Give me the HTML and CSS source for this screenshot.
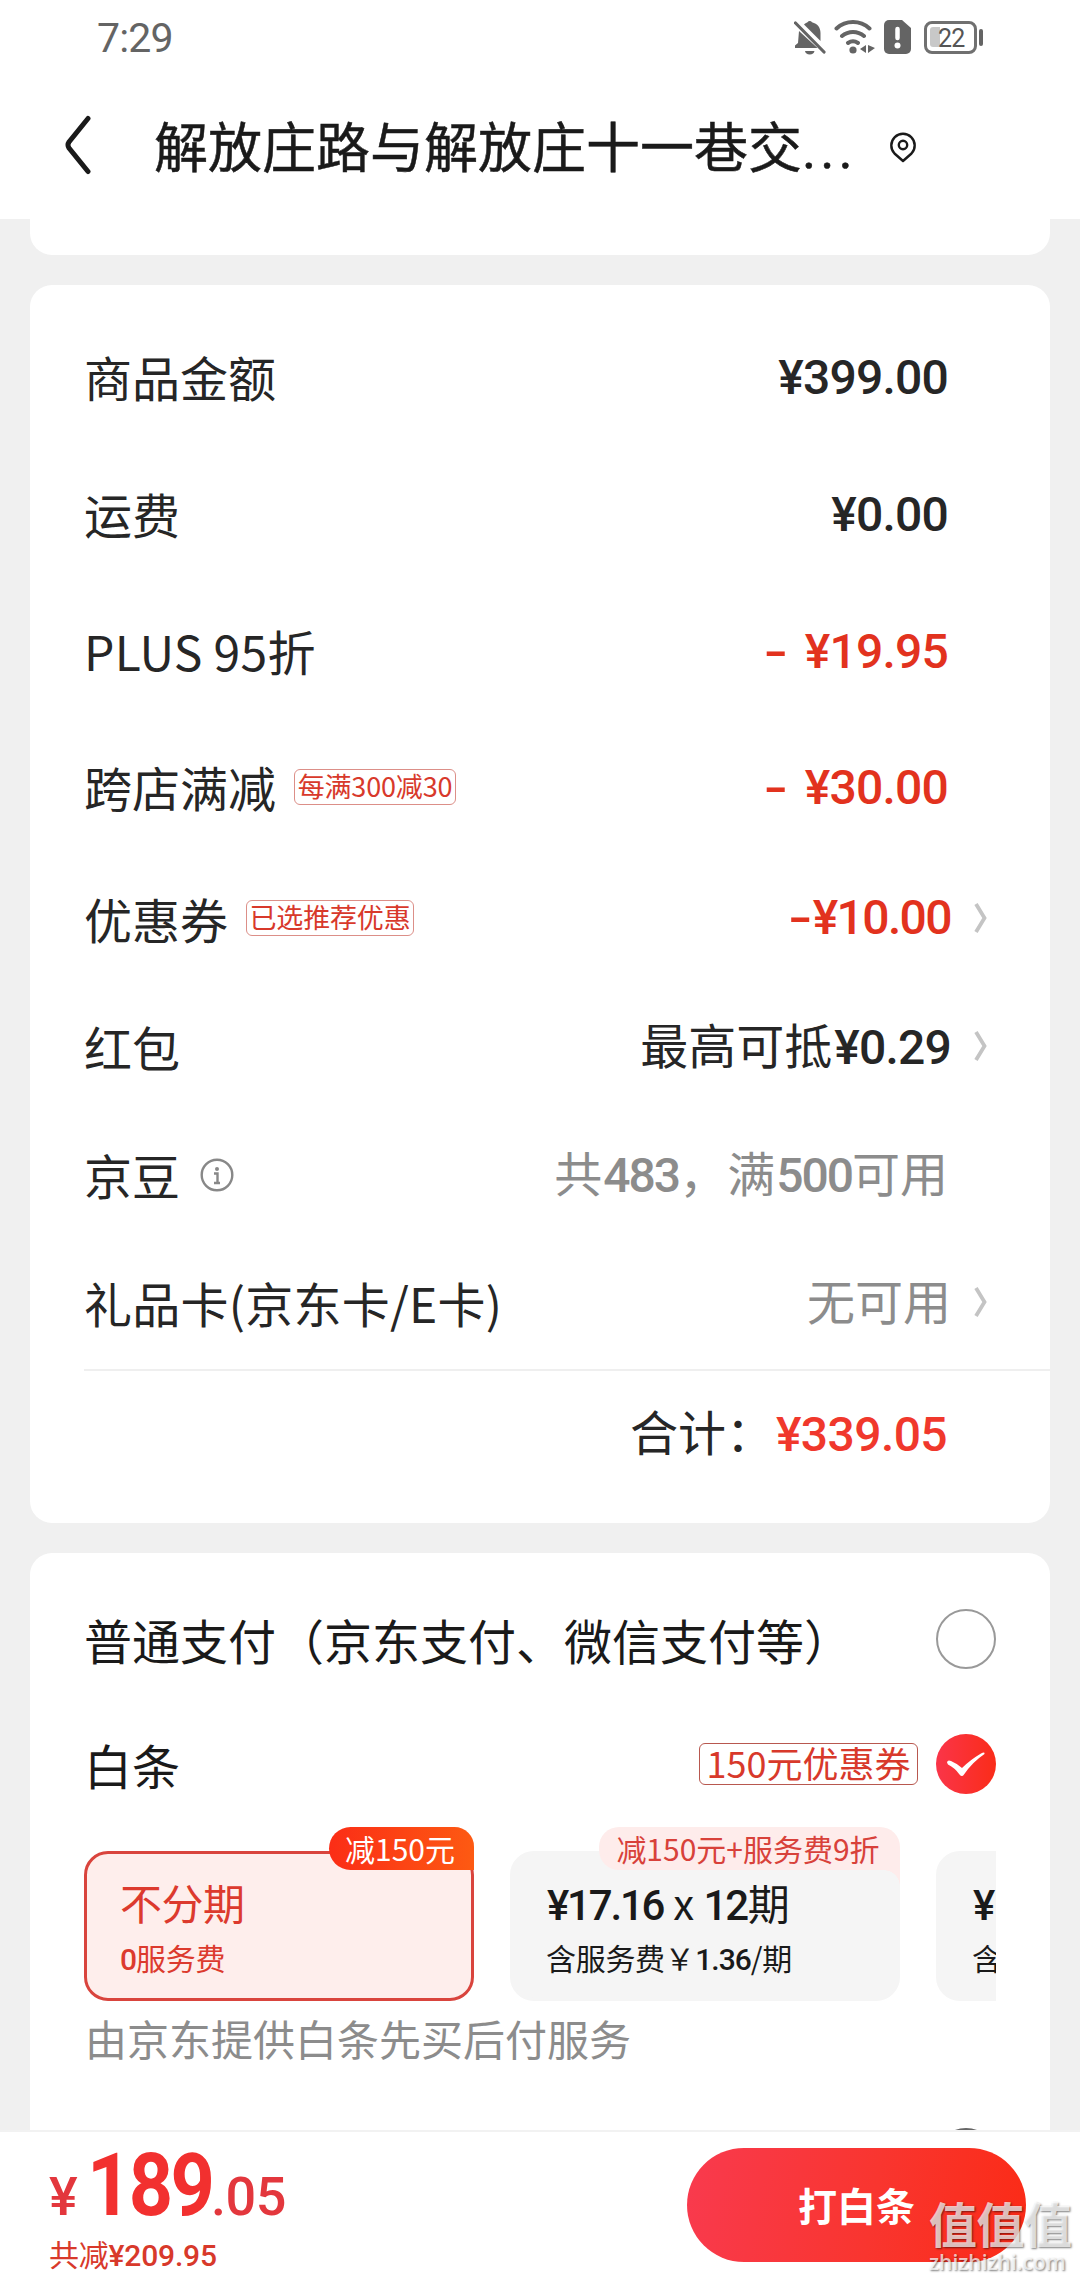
FILE: index.html
```html
<!DOCTYPE html>
<html lang="zh-CN">
<head>
<meta charset="utf-8">
<title>结算</title>
<link rel="stylesheet" href="styles.css">
</head>
<body>
<div class="page">
  <header class="header">
    <div class="status">
      <span class="time">7:29</span>
      <div class="status-icons">
        <svg class="i-bell" width="32" height="36" viewBox="0 0 32 36">
          <path d="M10 5.500C11.500 4 13 3.500 13.500 3.200a2.800 2.800 0 0 1 4.500 0c5.500 1.600 8.500 5 8.500 10.800v8zM5 12l18.500 17H1v-2.500l3-2.500z" fill="#646464"/>
          <path d="M1.500 4l28.500 29" stroke="#646464" stroke-width="3.200" stroke-linecap="round"/>
          <path d="M11 32h9.500a4.800 4 0 0 1-9.500 0z" fill="#646464"/>
        </svg>
        <svg class="i-wifi" width="41" height="36" viewBox="0 0 41 36" fill="none" stroke="#646464" stroke-width="4" stroke-linecap="round">
          <path d="M2.500 9.500a24.500 24.500 0 0 1 33 0M8 17a17 17 0 0 1 22 0M14 24a9 9 0 0 1 10 0"/>
          <circle cx="19" cy="31" r="3.600" fill="#646464" stroke="none"/>
          <path d="M32 26v8l-6-4zM34 26v8l7-5z" fill="#646464" stroke="none"/>
        </svg>
        <svg class="i-sim" width="28" height="34" viewBox="0 0 28 34">
          <path d="M5 0h13l9 8v21a5 5 0 0 1-5 5H5a5 5 0 0 1-5-5V5a5 5 0 0 1 5-5z" fill="#646464"/>
          <path d="M13.500 9v9" stroke="#fff" stroke-width="4.500" stroke-linecap="round"/>
          <circle cx="13.500" cy="25.500" r="3" fill="#fff"/>
        </svg>
        <div class="battery"><i class="charge"></i><span>22</span></div>
      </div>
    </div>
    <div class="nav">
      <svg class="back" width="26" height="60" viewBox="0 0 26 60"><path d="M23 3.500L4 27q-2 3 0 6L23 56.500" fill="none" stroke="#1a1a1a" stroke-width="5" stroke-linecap="round"/></svg>
      <h1 class="title">解放庄路与解放庄十一巷交<span class="dots">...</span></h1>
      <svg class="pin" width="28" height="32" viewBox="0 0 28 32" fill="none" stroke="#1a1a1a" stroke-width="2.400"><path d="M14 30L5.500 22.500A11.700 11.700 0 1 1 22.500 22.500z" stroke-linejoin="round"/><circle cx="14" cy="14" r="4.200"/></svg>
    </div>
  </header>

  <main class="content">
    <section class="card card-prev"></section>

    <section class="card bill">
      <div class="row tall"><span class="label">商品金额</span><span class="value num">¥399.00</span></div>
      <div class="row tall"><span class="label">运费</span><span class="value num">¥0.00</span></div>
      <div class="row tall"><span class="label latin">PLUS 95折</span><span class="value num red"><span class="minus spaced">-</span>¥19.95</span></div>
      <div class="row tall last"><span class="label">跨店满减</span><span class="tag tag-a">每满300减30</span><span class="value num red"><span class="minus spaced">-</span>¥30.00</span></div>
      <div class="row link"><span class="label">优惠券</span><span class="tag tag-b">已选推荐优惠</span><span class="value num red tight"><span class="minus">-</span>¥10.00</span><svg class="arrow" width="13" height="32" viewBox="0 0 13 32"><path d="M2 2l8.500 14L2 30"/></svg></div>
      <div class="row link"><span class="label">红包</span><span class="value mixed">最高可抵<b class="num gap">¥0.29</b></span><svg class="arrow" width="13" height="32" viewBox="0 0 13 32"><path d="M2 2l8.500 14L2 30"/></svg></div>
      <div class="row"><span class="label">京豆</span>
        <svg class="info" width="34" height="34" viewBox="0 0 34 34"><circle cx="17" cy="17" r="15.300" fill="none" stroke="#888" stroke-width="2.400"/><circle cx="17" cy="11" r="2" fill="#888"/><path d="M14 15.500h3.500V25M14 25h6" fill="none" stroke="#888" stroke-width="2.400"/></svg>
        <span class="value mixed muted">共<b class="num">483</b>，满<b class="num">500</b>可用</span></div>
      <div class="row link"><span class="label latin">礼品卡(京东卡/E卡)</span><span class="value mixed muted">无可用</span><svg class="arrow" width="13" height="32" viewBox="0 0 13 32"><path d="M2 2l8.500 14L2 30"/></svg></div>
      <div class="total"><span>合计：</span><span class="num total-num">¥339.05</span></div>
    </section>

    <section class="card pay">
      <div class="pay-row"><span class="label">普通支付（京东支付、微信支付等）</span><i class="radio"></i></div>
      <div class="pay-row baitiao"><span class="label">白条</span><span class="coupon">150元优惠券</span>
        <svg class="checked" width="60" height="60" viewBox="0 0 60 60">
          <defs><linearGradient id="g" x1="0" y1="0" x2="1" y2="0"><stop offset="0" stop-color="#fa3549"/><stop offset="1" stop-color="#fa2c19"/></linearGradient></defs>
          <circle cx="30" cy="30" r="30" fill="url(#g)"/>
          <path d="M11 28.500q.5-3 4-1.500 5 2 11 7 8-8 19-14.500 4-2 3.500.5-12 8-20.500 20.500-2 3-4.500 0Q19 34 12 30.500z" fill="#fff"/>
        </svg>
      </div>
      <div class="plans">
        <div class="plan active">
          <span class="badge badge-hot">减150元</span>
          <p class="plan-main">不分期</p>
          <p class="plan-sub"><b class="num">0</b>服务费</p>
        </div>
        <div class="plan">
          <span class="badge badge-soft">减150元+服务费9折</span>
          <p class="plan-main"><b class="num">¥17.16</b> x <b class="num">12</b>期</p>
          <p class="plan-sub">含服务费<span class="yen">￥</span><b class="num">1.36</b>/期</p>
        </div>
        <div class="plan">
          <p class="plan-main"><b class="num">¥</b></p>
          <p class="plan-sub">含</p>
        </div>
      </div>
      <p class="note">由京东提供白条先买后付服务</p>
      <div class="pay-next"><i class="radio dark"></i></div>
    </section>
  </main>

  <footer class="footer">
    <div class="sum">
      <div class="sum-price num"><span>¥</span><strong>189</strong><span>.05</span></div>
      <div class="sum-off">共减<b class="num">¥209.95</b></div>
    </div>
    <div class="submit">打白条</div>
  </footer>
  <div class="watermark"><span class="wm-name">值值值</span><span class="wm-site">zhizhizhi.com</span></div>
</div>
</body>
</html>
```

FILE: styles.css
```css
* { box-sizing: border-box; margin: 0; padding: 0; }
body { background: #f0f0f0; color: #262626; font-family: "Noto Sans CJK SC", sans-serif; font-size: 48px; line-height: 1.3; }
svg { display: block; flex: none; }
i { display: block; flex: none; }
.num { font-family: Roboto, "Noto Sans CJK SC", sans-serif; font-weight: 500; }
b.num { line-height: 0; }

.page { position: relative; display: flex; flex-direction: column; width: 1080px; height: 2280px; overflow: hidden; white-space: nowrap; }

/* header */
.header { flex: none; height: 219px; background: #fff; }
.status { display: flex; align-items: center; justify-content: space-between; height: 74px; padding: 0 103px 0 97px; }
.time { font: 400 41px/1 Roboto, sans-serif; letter-spacing: -0.8px; color: #646464; padding-top: 3px; }
.status-icons { display: flex; align-items: center; }
.i-wifi { margin-left: 8px; }
.i-sim { margin-left: 9px; margin-right: 12px; }
.battery { position: relative; display: flex; align-items: center; width: 53px; height: 33px; border: 3px solid #707070; border-radius: 8px; padding-left: 3px; }
.battery::after { content: ""; position: absolute; left: 52px; top: 5px; width: 4px; height: 17px; border-radius: 2px; background: #646464; }
.charge { width: 10px; height: 20px; border-radius: 3px 0 0 3px; background: #c8c8c8; }
.battery span { font: 400 25px/1 Roboto, sans-serif; letter-spacing: -0.8px; color: #555; margin-left: -2px; padding-top: 2px; }
.nav { display: flex; align-items: center; height: 145px; padding: 0 0 3px 65px; }
.title { margin-left: 63px; padding-top: 4px; font-size: 54px; font-weight: 400; line-height: 70px; color: #1a1a1a; -webkit-text-stroke: 0.5px #1a1a1a; }
.dots { font-family: Roboto, sans-serif; letter-spacing: 4px; }
.pin { margin-left: 32px; margin-top: 3px; }

/* cards */
.content { flex: 1; min-height: 0; overflow: hidden; padding: 0 30px; }
.card { background: #fff; border-radius: 22px; }
.card-prev { height: 36px; border-radius: 0 0 22px 22px; margin-bottom: 30px; }

.bill { height: 1238px; padding-top: 23px; margin-bottom: 30px; }
.row { display: flex; align-items: center; height: 128px; padding: 0 63px 0 54px; }
.row.tall { height: 137px; }
.row.last { height: 135px; }
.latin { letter-spacing: 0.25px; }
.value { margin-left: auto; margin-right: 39px; }
.value.num, .value .num { letter-spacing: -0.8px; }
.tall .value { padding-top: 3px; }
.link .value { margin-right: 23px; }
.value.mixed { padding-bottom: 5px; }
.value.tight { letter-spacing: -1.6px; }
.gap { margin-left: 2px; }
.muted { color: #8c8c8c; }
.muted .num { letter-spacing: -2px; margin-left: 1px; }
.red { color: #e2321e; }
.minus { display: inline-block; transform: scaleX(1.45); transform-origin: right; margin-right: 3px; }
.minus.spaced { margin-right: 18px; }
.arrow path { fill: none; stroke: #c4c4c4; stroke-width: 3.800; }
.info { margin-left: 20px; margin-top: 2px; }
.tag { height: 36px; border: 1px solid #dc8f88; border-radius: 6px; color: #d8392b; font-size: 27px; line-height: 32px; text-align: center; letter-spacing: -0.15px; }
.tag-a { margin-left: 18px; width: 162px; }
.tag-b { margin-left: 18px; width: 168px; }
.total { display: flex; align-items: baseline; justify-content: flex-end; height: 120px; margin: 3px 0 0 54px; padding: 28px 103px 0 0; border-top: 2px solid #efefef; }
.total-num { color: #f0382c; letter-spacing: -0.6px; margin-left: 2px; }

/* payment */
.pay { padding: 32px 54px 0; }
.pay-row { display: flex; align-items: center; height: 108px; color: #1a1a1a; }
.baitiao { height: 133px; padding-top: 9px; }
.radio { width: 60px; height: 60px; margin-left: auto; border: 2px solid #999; border-radius: 50%; }
.coupon { margin-left: auto; margin-right: 18px; width: 219px; height: 42px; border: 1.500px solid #b8584f; border-radius: 6px; color: #d8392b; font-size: 36px; line-height: 36px; text-align: center; }
.plans { display: flex; gap: 36px; height: 175px; padding-top: 25px; overflow: hidden; }
.plan { position: relative; flex: none; width: 390px; height: 150px; padding: 24px 33px 0; border: 3px solid #f5f5f5; border-radius: 24px; background: #f5f5f5; color: #1a1a1a; }
.plan.active { border-color: #d9443d; background: #feeeec; color: #dc3a2e; }
.plan-main { font-size: 42px; line-height: 48px; letter-spacing: -0.5px; }
.plan-main .num { letter-spacing: -2.2px; margin-left: 1px; margin-right: 1px; }
.plan-sub { margin-top: 11px; font-size: 30px; line-height: 40px; letter-spacing: -0.3px; }
.plan-sub .num { letter-spacing: -1px; }
.yen { letter-spacing: 0.5px; }
.badge { position: absolute; right: -3px; top: -27px; height: 43px; font-size: 30px; line-height: 42px; text-align: center; }
.badge-hot { width: 145px; color: #fff; background: linear-gradient(90deg, #fb2d16, #fd5a12); border-radius: 22px 20px 0 22px; padding-right: 3px; }
.badge-soft { width: 301px; color: #d8413a; background: #feeceb; border-radius: 20px 20px 0 20px; padding-right: 3px; }
.badge-soft::after { content: ""; position: absolute; right: 0; top: 43px; width: 16px; height: 16px; background: radial-gradient(circle at 0 100%, #f5f5f5 15.500px, #feeceb 16px); }
.note { font-size: 42px; line-height: 74px; color: #8c8c8c; padding-left: 1px; }
.pay-next { display: flex; padding-top: 53px; height: 160px; }
.dark { border-color: #666; }

/* bottom bar */
.footer { flex: none; display: flex; justify-content: space-between; height: 150px; border-top: 2px solid #f2f2f2; background: #fff; padding: 16px 54px 0 49px; }
.sum-price { display: flex; align-items: baseline; margin-top: -11px; color: #e3373d; font-size: 54px; line-height: 96px; letter-spacing: -0.5px; }
.sum-price strong { font-size: 87px; font-weight: 700; color: #f2302f; letter-spacing: -3px; margin: 0 -17px 0 10px; transform: scaleX(.89); transform-origin: left; }
.sum-off { font-size: 30px; line-height: 40px; color: #d8392b; margin-top: -12px; letter-spacing: -0.2px; }
.submit { width: 339px; height: 114px; border-radius: 57px; background: linear-gradient(100deg, #f93a4e, #f9352f 55%, #fb2b16); color: #fff; font-size: 39px; font-weight: 700; line-height: 113px; text-align: center; }
.watermark { position: absolute; left: 929px; top: 2196px; display: flex; flex-direction: column; color: rgba(255, 255, 255, .72); text-shadow: 1px 1px 2px rgba(0, 0, 0, .5); }
.wm-name { font-size: 48px; font-weight: 700; line-height: 52px; letter-spacing: -0.5px; }
.wm-site { font: 600 21px/28px "Open Sans", sans-serif; letter-spacing: 0; }
```
